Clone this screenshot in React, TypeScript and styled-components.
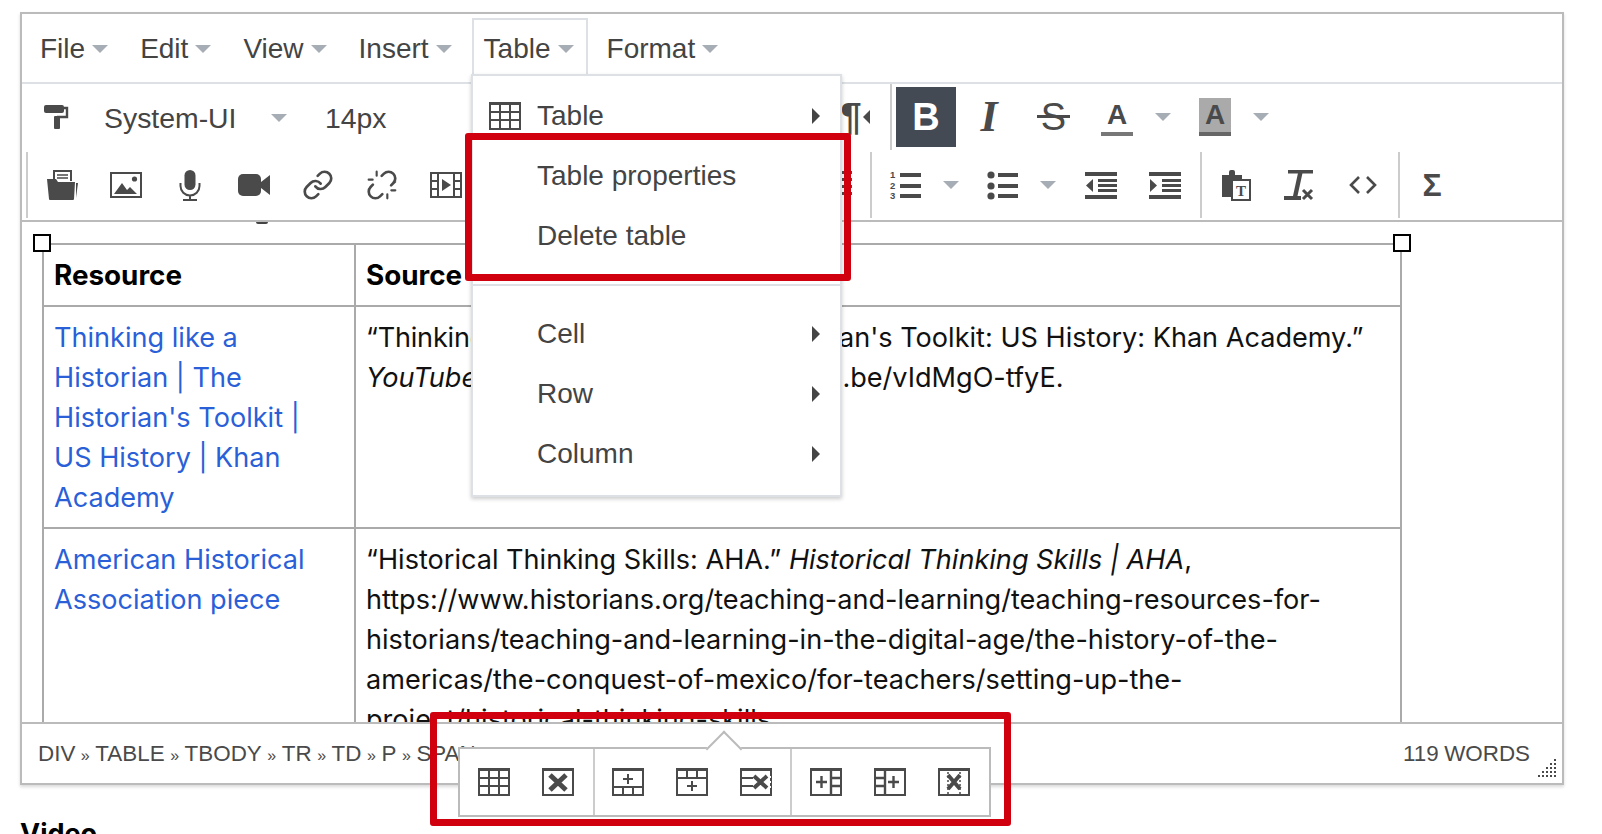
import React from "react";
import styled, { createGlobalStyle } from "styled-components";

const ink = "#4a4a4a";

const GlobalStyle = createGlobalStyle`
  html, body {
    margin: 0;
    height: 100%;
    overflow: hidden;
    background: #fff;
  }
  * {
    box-sizing: border-box;
  }
`;

const Editor = styled.div`
  position: relative;
  width: 1544px;
  height: 773px;
  margin: 12px 0 0 20px;
  display: flex;
  flex-direction: column;
  border: 2px solid #bbb;
  box-shadow: 0 2px 3px rgba(0, 0, 0, 0.15);
  font-family: "Liberation Sans", Arial, sans-serif;
  font-size: 28px;
  color: #444;
  background: #fff;
`;

const MenuBar = styled.div`
  height: 68px;
  flex: none;
  display: flex;
  align-items: flex-start;
  padding-left: 2px;
`;

const MenuButton = styled.div<{ $open?: boolean }>`
  height: 58px;
  margin: 4px ${(p) => (p.$open ? 3 : 4)}px 0 4px;
  padding: 2px ${(p) => (p.$open ? 12 : 10)}px 0 10px;
  display: flex;
  align-items: center;
  gap: 7px;
  border: 2px solid ${(p) => (p.$open ? "#dde0e4" : "transparent")};
  border-bottom: none;
`;

const Caret = styled.span`
  display: block;
  width: 0;
  height: 0;
  flex: none;
  border-style: solid;
  border-width: 8px 8px 0;
  border-color: #a6adb5 transparent transparent;
`;

const ToolBar = styled.div`
  height: 140px;
  flex: none;
  display: flex;
  flex-direction: column;
  border-top: 2px solid #dde0e4;
  border-bottom: 2px solid #bbb;
`;

const ToolRow = styled.div<{ $h: number; $pad: number }>`
  height: ${(p) => p.$h}px;
  display: flex;
  align-items: stretch;
  padding-left: ${(p) => p.$pad}px;
`;

const ToolButton = styled.div`
  width: 64px;
  flex: none;
  display: flex;
  align-items: center;
  justify-content: center;
  color: ${ink};
`;

const CaretCell = styled.div<{ $w: number; $after?: number }>`
  width: ${(p) => p.$w}px;
  margin-right: ${(p) => p.$after ?? 0}px;
  flex: none;
  display: flex;
  align-items: center;
  justify-content: center;
`;

const Picker = styled.div<{ $w: number; $left: number; $right: number }>`
  width: ${(p) => p.$w}px;
  flex: none;
  display: flex;
  align-items: center;
  justify-content: space-between;
  font-size: 28.4px;
  padding: 2px ${(p) => p.$right}px 0 ${(p) => p.$left}px;
`;

const Gap = styled.div<{ $w: number }>`
  width: ${(p) => p.$w}px;
  flex: none;
`;

const ToolGroup = styled.div<{ $w?: number }>`
  display: flex;
  align-items: stretch;
  width: ${(p) => (p.$w ? `${p.$w}px` : "auto")};
  flex: none;
  margin: 2px 0;
  padding-left: 2px;
  border-left: 2px solid #ccc;
`;

const BoldButton = styled.div`
  width: 60px;
  height: 60px;
  align-self: center;
  margin: 0 1px 0 4px;
  display: flex;
  align-items: center;
  justify-content: center;
  background: #434a54;
  color: #fff;
  font-weight: 700;
  font-size: 38px;
`;

const VRule = styled.div`
  width: 2px;
  margin-left: 2px;
  background: #ccc;
`;

const Glyph = styled.span<{ $size?: number; $italic?: boolean; $bold?: boolean; $font?: string }>`
  font-size: ${(p) => p.$size ?? 32}px;
  font-style: ${(p) => (p.$italic ? "italic" : "normal")};
  font-weight: ${(p) => (p.$bold ? 700 : 400)};
  font-family: ${(p) => p.$font ?? `"Liberation Sans", Arial, sans-serif`};
  line-height: 1;
  color: ${ink};
`;

const StruckGlyph = styled(Glyph)`
  position: relative;
  margin-left: 1px;
  &::after {
    content: "";
    position: absolute;
    left: -4px;
    right: -4px;
    top: 17px;
    height: 3px;
    background: ${ink};
  }
`;

const SigmaGlyph = styled(Glyph)`
  margin-right: 4px;
`;

const ColorGlyph = styled.span<{ $filled?: boolean }>`
  width: 32px;
  height: 38px;
  display: flex;
  justify-content: center;
  align-items: center;
  font-weight: 700;
  font-size: 28px;
  color: ${ink};
  background: ${(p) => (p.$filled ? "#aaa" : "transparent")};
  border-bottom: 4px solid ${(p) => (p.$filled ? "#666" : "#777")};
`;

const Pilcrow = styled.span`
  display: flex;
  align-items: center;
  gap: 1px;
  margin-right: 2px;
  font-size: 38px;
  font-weight: 700;
  color: ${ink};
  line-height: 1;
  &::after {
    content: "";
    border-style: solid;
    border-width: 7px 7px 7px 0;
    border-color: transparent ${ink} transparent transparent;
  }
`;

const Dashes = styled.div`
  width: 10px;
  height: 28px;
  align-self: center;
  margin: 0 18px 0 22px;
  background: repeating-linear-gradient(${ink} 0 3px, transparent 3px 7px);
`;

const Content = styled.div`
  position: relative;
  flex: 1;
  min-height: 0;
  overflow: hidden;
  padding: 21px 0 0 20px;
  font-family: Inter, "Liberation Sans", sans-serif;
  font-size: 27.1px;
  line-height: 40px;
  color: #111;
`;

const Descender = styled.div`
  position: absolute;
  left: 234px;
  top: 0;
  width: 12px;
  height: 2px;
  border-radius: 0 0 6px 6px;
  background: #444;
`;

const DocTable = styled.table`
  width: 1360px;
  border-collapse: collapse;
  table-layout: fixed;
`;

const Cell = styled.td`
  border: 2px solid #aaa;
  padding: 11px 11px 9px 10px;
  vertical-align: top;
`;

const HeadCell = styled(Cell)`
  padding-top: 10px;
  padding-bottom: 10px;
  font-size: 27.8px;
  font-weight: 700;
  color: #000;
`;

const DocLink = styled.span`
  color: #2a5fd8;
`;

// the stretch of a citation that sits behind the open menu
const Tucked = styled.span<{ $spacing: number }>`
  letter-spacing: ${(p) => p.$spacing}px;
`;

const Handle = styled.div<{ $left: number }>`
  position: absolute;
  left: ${(p) => p.$left}px;
  top: 12px;
  width: 18px;
  height: 18px;
  background: #fff;
  border: 2px solid #000;
`;

const StatusBar = styled.div`
  position: relative;
  height: 61px;
  flex: none;
  display: flex;
  align-items: center;
  justify-content: space-between;
  padding: 0 32px 0 16px;
  border-top: 2px solid #bbb;
  background: #fff;
  font-size: 22.4px;
  word-spacing: -0.8px;
  color: #4a4a4a;
`;

const PathSep = styled.span`
  font-size: 16px;
  word-spacing: 1.1px;
`;

const Grip = styled.svg`
  position: absolute;
  right: 6px;
  bottom: 6px;
`;

const Dropdown = styled.div`
  position: absolute;
  left: 449px;
  top: 60px;
  width: 371px;
  height: 423px;
  padding: 10px 0 0;
  background: #fff;
  border: 2px solid #dde0e4;
  box-shadow: 0 2px 4px rgba(0, 0, 0, 0.2);
`;

const DropItem = styled.div`
  height: 60px;
  display: flex;
  align-items: center;
  padding: 0 20px 0 16px;
`;

const ItemIcon = styled.div`
  width: 48px;
  flex: none;
  display: flex;
`;

const ItemLabel = styled.span`
  flex: 1;
`;

const SubCaret = styled.span`
  width: 0;
  height: 0;
  border-style: solid;
  border-width: 8px 0 8px 8px;
  border-color: transparent transparent transparent #444;
`;

const DropRule = styled.div`
  height: 2px;
  margin: 18px 0 18px;
  background: #dde0e4;
`;

const RedBox = styled.div<{ $left: number; $top: number; $w: number; $h: number }>`
  position: absolute;
  left: ${(p) => p.$left}px;
  top: ${(p) => p.$top}px;
  width: ${(p) => p.$w}px;
  height: ${(p) => p.$h}px;
  border: 7px solid #d0000f;
  border-radius: 3px;
  pointer-events: none;
`;

const PopBar = styled.div`
  position: absolute;
  left: 436px;
  top: 733px;
  height: 70px;
  display: flex;
  background: #fff;
  border: 2px solid #bbb;
  &::before {
    content: "";
    position: absolute;
    left: 251px;
    top: -13px;
    width: 24px;
    height: 24px;
    background: #fff;
    border-left: 2px solid #bbb;
    border-top: 2px solid #bbb;
    transform: rotate(45deg);
  }
`;

const PopGroup = styled.div<{ $pad: number; $right: number }>`
  position: relative;
  display: flex;
  align-items: center;
  padding: 0 ${(p) => p.$right}px 0 ${(p) => p.$pad}px;
  & + & {
    border-left: 2px solid #ccc;
  }
`;

const Heading = styled.h2`
  margin: 29px 0 0 20px;
  font-family: Inter, "Liberation Sans", sans-serif;
  font-size: 27px;
  line-height: 40px;
  font-weight: 700;
  color: #000;
`;

const Svg = ({ children, h = 32 }: { children: React.ReactNode; h?: number }) => (
  <svg width="32" height={h} viewBox={`0 0 32 ${h}`} fill={ink}>
    {children}
  </svg>
);

const stroke = { fill: "none", stroke: ink };

const Paint = () => (
  <Svg>
    <rect x="4" y="4" width="20" height="8" rx="2" />
    <path d="M24 7h3v9H17" {...stroke} strokeWidth="2.4" />
    <rect x="14" y="15" width="6" height="13" rx="1" />
  </Svg>
);

const Folder = () => (
  <Svg>
    <path d="M8 10V2h17v10" {...stroke} strokeWidth="2" />
    <path d="M11 6h11M11 9h11" {...stroke} strokeWidth="1.6" />
    <path d="M1 10h9l2 3h17l-1 17a1 1 0 0 1-1 1H4a1 1 0 0 1-1-1z" />
    <path d="M30 14h2l-2 15z" />
  </Svg>
);

const ImageIcon = () => (
  <Svg>
    <rect x="1" y="4" width="30" height="24" {...stroke} strokeWidth="2" />
    <path d="M4 25l8-11 5 7 3-3 7 7z" />
    <circle cx="24.5" cy="10" r="2.6" />
  </Svg>
);

const Mic = () => (
  <Svg>
    <rect x="10.5" y="1" width="11" height="20" rx="5.5" />
    <path d="M6.5 14v3a9.5 9.5 0 0 0 19 0v-3M16 26.5V31M9 31h14" {...stroke} strokeWidth="2" />
  </Svg>
);

const Camera = () => (
  <Svg>
    <rect x="0" y="5" width="23" height="22" rx="5" />
    <path d="M23 13l9-7v20l-9-7z" />
  </Svg>
);

const LinkIcon = () => (
  <Svg>
    <g transform="scale(1.333)" {...stroke} strokeWidth="2" strokeLinecap="round">
      <path d="M10 13a5 5 0 0 0 7.54.54l3-3a5 5 0 0 0-7.07-7.07l-1.72 1.71" />
      <path d="M14 11a5 5 0 0 0-7.54-.54l-3 3a5 5 0 0 0 7.07 7.07l1.71-1.71" />
    </g>
  </Svg>
);

const Unlink = () => (
  <Svg>
    <g transform="scale(1.333)" {...stroke} strokeWidth="2" strokeLinecap="round">
      <path d="m18.84 12.25 1.72-1.71h-.02a5 5 0 0 0-.12-7.07 5 5 0 0 0-6.95 0l-1.72 1.71" />
      <path d="m5.17 11.75-1.71 1.71a5 5 0 0 0 .12 7.07 5 5 0 0 0 6.95 0l1.71-1.71" />
      <path d="M8 2v3M2 8h3M16 19v3M19 16h3" strokeWidth="1.6" />
    </g>
  </Svg>
);

const Film = () => (
  <Svg>
    <rect x="1" y="4" width="30" height="24" {...stroke} strokeWidth="2" />
    <path d="M8 4v24M24 4v24M1 12h7M1 20h7M24 12h7M24 20h7" {...stroke} strokeWidth="2" />
    <path d="M12 10l9 6-9 6z" />
  </Svg>
);

const NumList = () => (
  <Svg>
    <text x="0" y="9" fontSize="9.5" fontWeight="700" fontFamily="Liberation Sans">1</text>
    <text x="0" y="19.500" fontSize="9.5" fontWeight="700" fontFamily="Liberation Sans">2</text>
    <text x="0" y="30" fontSize="9.5" fontWeight="700" fontFamily="Liberation Sans">3</text>
    <rect x="10" y="4" width="21" height="4" />
    <rect x="10" y="15" width="21" height="4" />
    <rect x="10" y="25" width="21" height="4" />
  </Svg>
);

const BulletList = () => (
  <Svg>
    <circle cx="4" cy="6" r="3.6" />
    <circle cx="4" cy="17" r="3.6" />
    <circle cx="4" cy="27" r="3.6" />
    <rect x="11" y="4" width="20" height="4" />
    <rect x="11" y="15" width="20" height="4" />
    <rect x="11" y="25" width="20" height="4" />
  </Svg>
);

const Outdent = () => (
  <Svg>
    <rect x="0" y="3" width="32" height="4" />
    <rect x="13" y="10" width="19" height="3" />
    <rect x="13" y="15" width="19" height="3" />
    <rect x="13" y="20" width="19" height="3" />
    <rect x="0" y="26" width="32" height="4" />
    <path d="M8 10v13l-7-6.500z" />
  </Svg>
);

const Indent = () => (
  <Svg>
    <rect x="0" y="3" width="32" height="4" />
    <rect x="13" y="10" width="19" height="3" />
    <rect x="13" y="15" width="19" height="3" />
    <rect x="13" y="20" width="19" height="3" />
    <rect x="0" y="26" width="32" height="4" />
    <path d="M1 10v13l7-6.500z" />
  </Svg>
);

const Paste = () => (
  <Svg>
    <path d="M2 6h7V3a2 2 0 0 1 2-2h2a2 2 0 0 1 2 2v3h7v5H12v17H2z" />
    <rect x="12" y="11" width="18" height="20" fill="#fff" stroke={ink} strokeWidth="2" />
    <text x="21" y="27" textAnchor="middle" fontSize="15" fontWeight="700" fontFamily="Liberation Serif">T</text>
  </Svg>
);

const ClearFormat = () => (
  <Svg>
    <g transform="translate(-2 0)">
      <rect x="6" y="1" width="25" height="3.500" />
      <path d="M16 4h4.500l-5 23H11z" />
      <rect x="1" y="27" width="18" height="4" />
      <path d="M21 21l9 9M30 21l-9 9" {...stroke} strokeWidth="3" />
    </g>
  </Svg>
);

const Code = () => (
  <Svg>
    <path d="M11 8l-8 8 8 8M19 8l8 8-8 8" {...stroke} strokeWidth="2.6" />
  </Svg>
);

const GridIcon = ({ children }: { children?: React.ReactNode }) => (
  <Svg h={28}>
    <rect x="1" y="1" width="30" height="26" {...stroke} strokeWidth="2" />
    <rect x="0" y="0" width="32" height="3" />
    <g {...stroke} strokeWidth="2">
      {children}
    </g>
  </Svg>
);

const TableIcon = () => <GridIcon><path d="M11 2v25M21 2v25M1 10h30M1 18h30" /></GridIcon>;
const TableDelete = () => <GridIcon><path d="M8 7l16 15M24 7L8 22" strokeWidth="5" /></GridIcon>;
const RowBefore = () => <GridIcon><path d="M1 19h30M11 19v8M21 19v8M16 6v10M11 11h10" /></GridIcon>;
const RowAfter = () => <GridIcon><path d="M1 10h30M11 2v8M21 2v8M16 13v10M11 18h10" /></GridIcon>;
const RowDelete = () => (
  <GridIcon>
    <path d="M1 10h12M1 18h12" />
    <path d="M14 8l13 12M27 8L14 20" strokeWidth="4" />
    <path d="M30 8v2M30 13v2M30 18v2" stroke="#fff" />
  </GridIcon>
);
const ColBefore = () => <GridIcon><path d="M21 2v25M21 10h10M21 18h10M6 14h11M11.500 8v12" strokeWidth="2.4" /></GridIcon>;
const ColAfter = () => <GridIcon><path d="M11 2v25M1 10h10M1 18h10M14 14h11M19.500 8v12" strokeWidth="2.4" /></GridIcon>;
const ColDelete = () => (
  <GridIcon>
    <path d="M10 4v22M22 4v22" strokeDasharray="2 2" strokeWidth="1.500" />
    <path d="M10 7l12 14M22 7L10 21" strokeWidth="4" />
  </GridIcon>
);

const GripDots = () => {
  const dots: React.ReactNode[] = [];
  for (let row = 0; row < 5; row++) {
    for (let col = 4 - row; col < 5; col++) {
      dots.push(<rect key={`${row}-${col}`} x={col * 4} y={row * 4} width="2" height="2" />);
    }
  }
  return (
    <Grip width="18" height="18" fill={ink}>
      {dots}
    </Grip>
  );
};

const menus = ["File", "Edit", "View", "Insert", "Table", "Format"];
const nodePath = ["DIV", "TABLE", "TBODY", "TR", "TD", "P", "SPAN"];

function Toolbar() {
  return (
    <ToolBar>
      <ToolRow $h={66} $pad={2}>
        <ToolButton><Paint /></ToolButton>
        <Picker $w={214} $left={16} $right={15}>System-UI<Caret /></Picker>
        <Picker $w={140} $left={23} $right={0}>14px</Picker>
        <Gap $w={382} />
        <ToolButton><Pilcrow>¶</Pilcrow></ToolButton>
        <VRule />
        <BoldButton>B</BoldButton>
        <ToolButton><Glyph $size={44} $italic $bold $font={`"Liberation Serif", serif`}>I</Glyph></ToolButton>
        <ToolButton><StruckGlyph $size={38}>S</StruckGlyph></ToolButton>
        <ToolButton><ColorGlyph>A</ColorGlyph></ToolButton>
        <CaretCell $w={28} $after={6}><Caret /></CaretCell>
        <ToolButton><ColorGlyph $filled>A</ColorGlyph></ToolButton>
        <CaretCell $w={28}><Caret /></CaretCell>
      </ToolRow>
      <ToolRow $h={70} $pad={4}>
        <ToolGroup $w={844}>
          <ToolButton><Folder /></ToolButton>
          <ToolButton><ImageIcon /></ToolButton>
          <ToolButton><Mic /></ToolButton>
          <ToolButton><Camera /></ToolButton>
          <ToolButton><LinkIcon /></ToolButton>
          <ToolButton><Unlink /></ToolButton>
          <ToolButton><Film /></ToolButton>
          <Gap $w={342} />
          <Dashes />
        </ToolGroup>
        <ToolGroup $w={330}>
          <ToolButton><NumList /></ToolButton>
          <CaretCell $w={26} $after={7}><Caret /></CaretCell>
          <ToolButton><BulletList /></ToolButton>
          <CaretCell $w={26} $after={8}><Caret /></CaretCell>
          <ToolButton><Outdent /></ToolButton>
          <ToolButton><Indent /></ToolButton>
        </ToolGroup>
        <ToolGroup $w={198}>
          <ToolButton><Paste /></ToolButton>
          <ToolButton><ClearFormat /></ToolButton>
          <ToolButton><Code /></ToolButton>
        </ToolGroup>
        <ToolGroup>
          <ToolButton><SigmaGlyph $size={32} $bold>Σ</SigmaGlyph></ToolButton>
        </ToolGroup>
      </ToolRow>
    </ToolBar>
  );
}

function TableMenu() {
  return (
    <Dropdown>
      <DropItem>
        <ItemIcon><TableIcon /></ItemIcon>
        <ItemLabel>Table</ItemLabel>
        <SubCaret />
      </DropItem>
      <DropItem><ItemIcon /><ItemLabel>Table properties</ItemLabel></DropItem>
      <DropItem><ItemIcon /><ItemLabel>Delete table</ItemLabel></DropItem>
      <DropRule />
      {["Cell", "Row", "Column"].map((label) => (
        <DropItem key={label}>
          <ItemIcon />
          <ItemLabel>{label}</ItemLabel>
          <SubCaret />
        </DropItem>
      ))}
    </Dropdown>
  );
}

function TablePopup() {
  return (
    <PopBar>
      <PopGroup $pad={2} $right={3}>
        <ToolButton><TableIcon /></ToolButton>
        <ToolButton><TableDelete /></ToolButton>
      </PopGroup>
      <PopGroup $pad={1} $right={2}>
        <ToolButton><RowBefore /></ToolButton>
        <ToolButton><RowAfter /></ToolButton>
        <ToolButton><RowDelete /></ToolButton>
      </PopGroup>
      <PopGroup $pad={2} $right={3}>
        <ToolButton><ColBefore /></ToolButton>
        <ToolButton><ColAfter /></ToolButton>
        <ToolButton><ColDelete /></ToolButton>
      </PopGroup>
    </PopBar>
  );
}

export default function App() {
  return (
    <>
      <GlobalStyle />
      <Editor>
        <MenuBar>
          {menus.map((m) => (
            <MenuButton key={m} $open={m === "Table"}>
              {m}
              <Caret />
            </MenuButton>
          ))}
        </MenuBar>
        <Toolbar />
        <Content>
          <Descender />
          <Handle $left={11} />
          <Handle $left={1371} />
          <DocTable>
            <colgroup>
              <col style={{ width: 312 }} />
              <col />
            </colgroup>
            <tbody>
              <tr>
                <HeadCell>Resource</HeadCell>
                <HeadCell>Source</HeadCell>
              </tr>
              <tr>
                <Cell>
                  <DocLink>Thinking like a Historian | The Historian's Toolkit | US History | Khan Academy</DocLink>
                </Cell>
                <Cell>
                  <Tucked $spacing={-0.22}>“Thinking like a Historian | The Histori</Tucked>an's Toolkit: US History: Khan Academy.”
                  <br />
                  <em>YouTube</em>
                  <Tucked $spacing={0.3}>, 12 Aug. 2019, https://youtu</Tucked>.be/vIdMgO-tfyE.
                </Cell>
              </tr>
              <tr>
                <Cell>
                  <DocLink>American Historical Association piece</DocLink>
                </Cell>
                <Cell>
                  “Historical Thinking Skills: AHA.” <em>Historical Thinking Skills | AHA</em>,
                  <br />
                  https://www.historians.org/teaching-and-learning/teaching-resources-for-
                  <br />
                  historians/teaching-and-learning-in-the-digital-age/the-history-of-the-
                  <br />
                  americas/the-conquest-of-mexico/for-teachers/setting-up-the-
                  <br />
                  project/historical-thinking-skills
                </Cell>
              </tr>
            </tbody>
          </DocTable>
        </Content>
        <StatusBar>
          <span>
            {nodePath.map((node, i) => (
              <React.Fragment key={node}>
                {i > 0 && <PathSep> » </PathSep>}
                {node}
              </React.Fragment>
            ))}
          </span>
          <span>119 WORDS</span>
          <GripDots />
        </StatusBar>
        <TableMenu />
        <RedBox $left={443} $top={119} $w={386} $h={148} />
        <TablePopup />
        <RedBox $left={408} $top={698} $w={581} $h={114} />
      </Editor>
      <Heading>Video</Heading>
    </>
  );
}
